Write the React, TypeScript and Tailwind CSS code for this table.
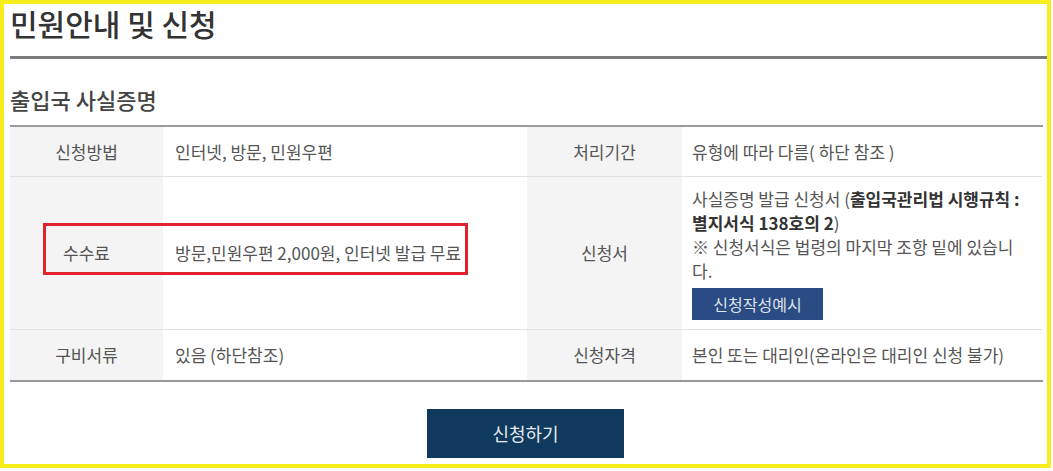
import React from "react";

const font = { fontFamily: '"Noto Sans CJK KR", "Noto Sans", sans-serif' };

export default function App() {
  return (
    <div
      className="w-[1051px] h-[468px] border-4 border-[#f8ee1c] bg-white pl-[6px] box-border"
      style={font}
    >
      <div className="h-[52px] pt-[1px] text-[30px] leading-[36px] text-[#333] font-medium">
        민원안내 및 신청
      </div>
      <div className="h-[3px] bg-[#7a7a7a]" />
      <div className="h-[66px] pt-[26px] text-[22px] leading-[28px] text-[#444] font-medium">
        출입국 사실증명
      </div>
      <div className="relative mr-[4px]">
        <div className="grid grid-cols-[153px_364px_155px_360px] border-t-2 border-t-[#9a9a9a] border-b-2 border-b-[#9a9a9a] text-[17px] text-[#555]">
          {/* Row 1 */}
          <div className="h-[50px] bg-[#f4f4f4] border-b border-[#e2e2e2] flex items-center justify-center">
            신청방법
          </div>
          <div className="h-[50px] border-b border-[#e2e2e2] flex items-center pl-[12px]">
            인터넷, 방문, 민원우편
          </div>
          <div className="h-[50px] bg-[#f4f4f4] border-b border-[#e2e2e2] flex items-center justify-center">
            처리기간
          </div>
          <div className="h-[50px] border-b border-[#e2e2e2] flex items-center pl-[10px]">
            유형에 따라 다름( 하단 참조 )
          </div>
          {/* Row 2 */}
          <div className="h-[153px] bg-[#f4f4f4] border-b border-[#e2e2e2] flex items-center justify-center">
            수수료
          </div>
          <div className="h-[153px] border-b border-[#e2e2e2] flex items-center pl-[12px]">
            방문,민원우편 2,000원, 인터넷 발급 무료
          </div>
          <div className="h-[153px] bg-[#f4f4f4] border-b border-[#e2e2e2] flex items-center justify-center">
            신청서
          </div>
          <div className="h-[153px] border-b border-[#e2e2e2] pl-[10px] pt-[10px] leading-[24px] whitespace-nowrap">
            <div>
              사실증명 발급 신청서 (
              <span className="font-bold text-[#333]">출입국관리법 시행규칙 :</span>
            </div>
            <div>
              <span className="font-bold text-[#333]">별지서식 138호의 2</span>)
            </div>
            <div>※ 신청서식은 법령의 마지막 조항 밑에 있습니</div>
            <div>다.</div>
            <div className="mt-[5px] w-[131px] h-[32px] bg-[#2a4b84] text-[#dfe3ea] text-[16px] flex items-center justify-center">
              신청작성예시
            </div>
          </div>
          {/* Row 3 */}
          <div className="h-[50px] bg-[#f4f4f4] flex items-center justify-center">
            구비서류
          </div>
          <div className="h-[50px] flex items-center pl-[12px]">있음 (하단참조)</div>
          <div className="h-[50px] bg-[#f4f4f4] flex items-center justify-center">
            신청자격
          </div>
          <div className="h-[50px] flex items-center pl-[10px]">
            본인 또는 대리인(온라인은 대리인 신청 불가)
          </div>
        </div>
        <div className="absolute left-[33px] top-[98px] w-[425px] h-[52px] border-[3px] border-[#e0232c] pointer-events-none" />
      </div>
      <div className="flex justify-center pt-[27px] pr-[6px]">
        <div className="w-[197px] h-[49px] bg-[#0f3a5e] text-[#e6e9ee] text-[18px] flex items-center justify-center">
          신청하기
        </div>
      </div>
    </div>
  );
}
